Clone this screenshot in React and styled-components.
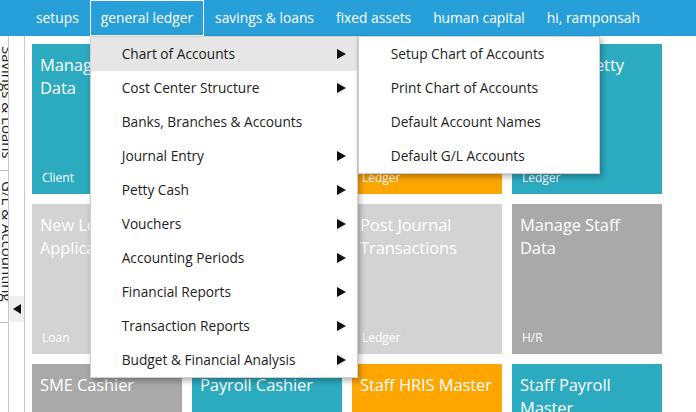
import styled, { createGlobalStyle } from "styled-components";

const Global = createGlobalStyle`
  html, body {
    margin: 0;
    padding: 0;
    background: #fff;
    overflow: hidden;
    font-family: "Open Sans", "Noto Sans", sans-serif;
  }
`;

const navItems = ["setups", "general ledger", "savings & loans", "fixed assets", "human capital", "hi, ramponsah"];

const menuItems = [
  { label: "Chart of Accounts", sub: true, active: true },
  { label: "Cost Center Structure", sub: true },
  { label: "Banks, Branches & Accounts" },
  { label: "Journal Entry", sub: true },
  { label: "Petty Cash", sub: true },
  { label: "Vouchers", sub: true },
  { label: "Accounting Periods", sub: true },
  { label: "Financial Reports", sub: true },
  { label: "Transaction Reports", sub: true },
  { label: "Budget & Financial Analysis", sub: true },
];

const subItems = ["Setup Chart of Accounts", "Print Chart of Accounts", "Default Account Names", "Default G/L Accounts"];

const tiles = [
  { title: "Manage Client Data", tag: "Client", color: "teal" },
  { title: "Manage Loan Accounts", tag: "Loan", color: "teal" },
  { title: "Manage Chart of Accounts", tag: "Ledger", color: "orange" },
  { title: "Manage Petty Cash", tag: "Ledger", color: "teal" },
  { title: "New Loan Application (SME)", tag: "Loan", color: "light" },
  { title: "Loan Disbursement", tag: "Loan", color: "gray" },
  { title: "Post Journal Transactions", tag: "Ledger", color: "light" },
  { title: "Manage Staff Data", tag: "H/R", color: "gray" },
  { title: "SME Cashier", tag: "Cashier", color: "gray" },
  { title: "Payroll Cashier", tag: "Cashier", color: "teal" },
  { title: "Staff HRIS Master", tag: "H/R", color: "orange" },
  { title: "Staff Payroll Master", tag: "H/R", color: "teal" },
];

const colors = {
  teal: "#2caac0",
  orange: "#ffa500",
  light: "#d3d3d3",
  gray: "#a9a9a9",
};

export default function App() {
  return (
    <>
      <Global />
      <Page>
        <TopBar>
          {navItems.map((n) => (
            <NavItem key={n} $active={n === "general ledger"}>
              {n}
              {n === "general ledger" && (
                <Menu>
                  {menuItems.map((m) => (
                    <MenuItem key={m.label} $active={m.active}>
                      <span>{m.label}</span>
                      {m.sub && <Arrow />}
                      {m.active && (
                        <SubMenu>
                          {subItems.map((s) => (
                            <SubItem key={s}>{s}</SubItem>
                          ))}
                        </SubMenu>
                      )}
                    </MenuItem>
                  ))}
                </Menu>
              )}
            </NavItem>
          ))}
        </TopBar>
        <Body>
          <TabStrip>
            <Tab $h={135}>Savings &amp; Loans</Tab>
            <Tab $h={152}>G/L &amp; Accounting</Tab>
          </TabStrip>
          <ToggleCol>
            <ToggleBox>
              <LeftArrow />
            </ToggleBox>
          </ToggleCol>
          <Grid>
            {tiles.map((t) => (
              <Tile key={t.title} $bg={colors[t.color]}>
                <TileTitle>{t.title}</TileTitle>
                <TileTag>{t.tag}</TileTag>
              </Tile>
            ))}
          </Grid>
        </Body>
      </Page>
    </>
  );
}

const Page = styled.div`
  width: 696px;
  height: 412px;
  overflow: hidden;
  display: flex;
  flex-direction: column;
`;

const TopBar = styled.div`
  height: 36px;
  background: #27a0da;
  display: flex;
  align-items: stretch;
  padding-left: 25px;
  flex-shrink: 0;
  position: relative;
  z-index: 5;
`;

const NavItem = styled.div`
  position: relative;
  padding: 0 ${(p) => (p.$active ? "10px" : "11px")};
  line-height: ${(p) => (p.$active ? "34px" : "36px")};
  color: #fff;
  font-size: 13.8px;
  border: ${(p) => (p.$active ? "1px solid #fff" : "none")};
  white-space: nowrap;
`;

const Menu = styled.div`
  position: absolute;
  top: 35px;
  left: -1px;
  width: 268px;
  background: #fff;
  border: 1px solid #d0d0d0;
  box-sizing: border-box;
  box-shadow: 2px 3px 6px rgba(0, 0, 0, 0.3);
`;

const MenuItem = styled.div`
  position: relative;
  height: 34px;
  display: flex;
  align-items: center;
  justify-content: space-between;
  padding: 0 11px 0 31px;
  background: ${(p) => (p.$active ? "#e6e6e6" : "transparent")};
  color: #222;
  font-size: 13.7px;
  line-height: 34px;
`;

const Arrow = styled.i`
  width: 0;
  height: 0;
  border-top: 5px solid transparent;
  border-bottom: 5px solid transparent;
  border-left: 9px solid #111;
`;

const SubMenu = styled.div`
  position: absolute;
  top: -1px;
  left: 267px;
  width: 242px;
  background: #fff;
  border: 1px solid #d0d0d0;
  box-sizing: border-box;
  box-shadow: 2px 3px 6px rgba(0, 0, 0, 0.3);
`;

const SubItem = styled.div`
  height: 34px;
  line-height: 34px;
  padding-left: 32px;
  color: #222;
  font-size: 13.7px;
`;

const Body = styled.div`
  flex: 1;
  display: flex;
  min-height: 0;
`;

const TabStrip = styled.div`
  width: 8px;
  border-right: 1px solid #c8c8c8;
  overflow: hidden;
  display: flex;
  flex-direction: column;
`;

const Tab = styled.div`
  height: ${(p) => p.$h}px;
  width: 20px;
  box-sizing: border-box;
  border-bottom: 1px solid #bbb;
  writing-mode: vertical-rl;
  font-size: 15px;
  color: #222;
  padding-top: 10px;
  line-height: 18px;
  margin-left: -3px;
  white-space: nowrap;
  flex-shrink: 0;
`;

const ToggleCol = styled.div`
  width: 15px;
  border-right: 1px solid #c8c8c8;
  padding-top: 260px;
`;

const ToggleBox = styled.div`
  height: 26px;
  background: #f0f0f0;
  display: flex;
  align-items: center;
  justify-content: center;
`;

const LeftArrow = styled.i`
  width: 0;
  height: 0;
  border-top: 5px solid transparent;
  border-bottom: 5px solid transparent;
  border-right: 8px solid #111;
`;

const Grid = styled.div`
  display: grid;
  grid-template-columns: repeat(4, 150px);
  grid-auto-rows: 150px;
  gap: 10px;
  padding: 8px 0 0 7px;
`;

const Tile = styled.div`
  background: ${(p) => p.$bg};
  color: #fff;
  display: flex;
  flex-direction: column;
  justify-content: space-between;
  padding: 9px 6px 8px 8px;
  box-sizing: border-box;
`;

const TileTitle = styled.div`
  font-size: 16.5px;
  line-height: 23px;
  letter-spacing: -0.1px;
`;

const TileTag = styled.div`
  font-size: 12px;
  padding-left: 2px;
`;
